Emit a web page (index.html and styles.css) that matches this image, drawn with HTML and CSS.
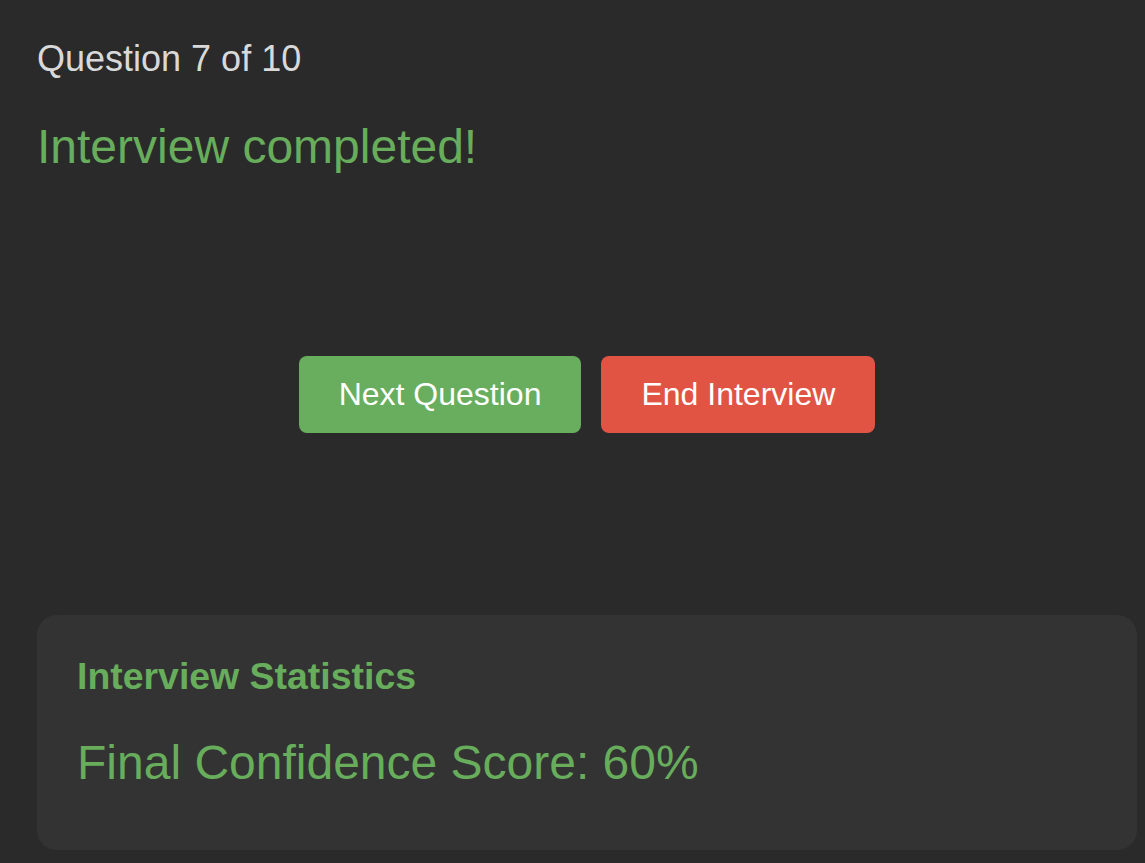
FILE: index.html
```html
<!DOCTYPE html>
<html lang="en">
<head>
<meta charset="utf-8">
<title>Interview</title>
<link rel="stylesheet" href="styles.css">
</head>
<body>
<main class="app">
  <p class="progress">Question 7 of 10</p>
  <h2 class="status">Interview completed!</h2>
  <div class="actions">
    <button class="btn btn-next" type="button">Next Question</button>
    <button class="btn btn-end" type="button">End Interview</button>
  </div>
  <section class="stats">
    <h3 class="stats-title">Interview Statistics</h3>
    <p class="stats-score">Final Confidence Score: 60%</p>
  </section>
</main>
</body>
</html>
```
FILE: styles.css
```css
html, body {
  margin: 0;
  padding: 0;
  background: #2a2a2a;
  overflow: hidden;
}

body {
  font-family: "Liberation Sans", Arial, sans-serif;
  color: #dddddd;
}

.app {
  width: 1100px;
  padding: 38px 37px 0 37px;
}

.progress {
  margin: 0;
  font-size: 36px;
  color: #d9d9d9;
}

.status {
  margin: 39px 0 0 0;
  font-size: 48px;
  font-weight: normal;
  color: #67ad5c;
}

.actions {
  display: flex;
  justify-content: center;
  gap: 20px;
  margin-top: 182px;
}

.btn {
  font-family: "Liberation Sans", Arial, sans-serif;
  font-size: 32px;
  padding: 20px 40px;
  border: none;
  border-radius: 8px;
  color: #ffffff;
  line-height: normal;
  cursor: pointer;
}

.btn-next {
  background: #68ae5e;
}

.btn-end {
  background: #e15343;
}

.stats {
  margin-top: 182px;
  background: #333333;
  border-radius: 20px;
  padding: 40px 40px 40px 40px;
}

.stats-title {
  margin: 0 0 37px 0;
  font-size: 37.44px;
  font-weight: bold;
  color: #67ad5c;
}

.stats-score {
  margin: 0 0 20px 0;
  font-size: 48px;
  color: #67ad5c;
}
```
